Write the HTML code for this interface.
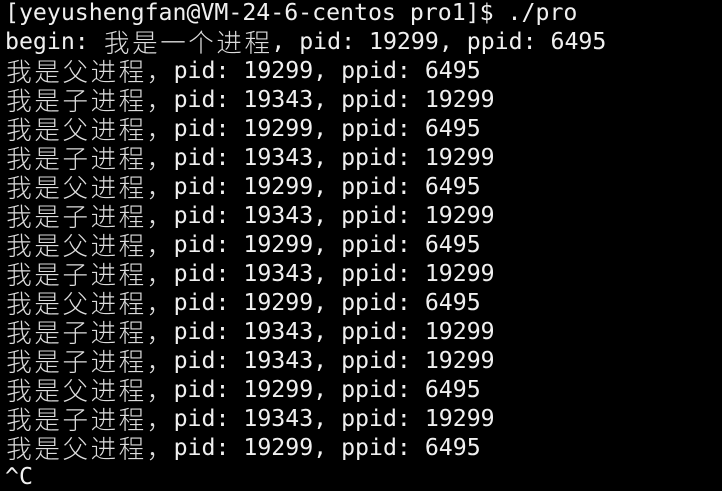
<!DOCTYPE html>
<html><head><meta charset="utf-8"><style>
html,body{margin:0;padding:0;background:#000;width:722px;height:469px;overflow:hidden}
.t{position:absolute;left:5px;top:-2px;color:#f0f0f0;font-family:"DejaVu Sans Mono","Noto Sans CJK SC",monospace;font-size:23.2px}
.t div{height:29px;line-height:29px;white-space:pre;overflow:visible}
.c{display:inline-block;width:28.1px;height:29px;line-height:29px;vertical-align:top;font-family:"Noto Sans CJK SC",sans-serif;text-align:center;font-weight:300;color:#ddd;font-size:25.5px}
</style></head><body><div class="t">
<div>[yeyushengfan@VM-24-6-centos pro1]$ ./pro</div>
<div>begin: <span class="c">我</span><span class="c">是</span><span class="c">一</span><span class="c">个</span><span class="c">进</span><span class="c">程</span>, pid: 19299, ppid: 6495</div>
<div><span class="c">我</span><span class="c">是</span><span class="c">父</span><span class="c">进</span><span class="c">程</span><span class="c">，</span>pid: 19299, ppid: 6495</div>
<div><span class="c">我</span><span class="c">是</span><span class="c">子</span><span class="c">进</span><span class="c">程</span><span class="c">，</span>pid: 19343, ppid: 19299</div>
<div><span class="c">我</span><span class="c">是</span><span class="c">父</span><span class="c">进</span><span class="c">程</span><span class="c">，</span>pid: 19299, ppid: 6495</div>
<div><span class="c">我</span><span class="c">是</span><span class="c">子</span><span class="c">进</span><span class="c">程</span><span class="c">，</span>pid: 19343, ppid: 19299</div>
<div><span class="c">我</span><span class="c">是</span><span class="c">父</span><span class="c">进</span><span class="c">程</span><span class="c">，</span>pid: 19299, ppid: 6495</div>
<div><span class="c">我</span><span class="c">是</span><span class="c">子</span><span class="c">进</span><span class="c">程</span><span class="c">，</span>pid: 19343, ppid: 19299</div>
<div><span class="c">我</span><span class="c">是</span><span class="c">父</span><span class="c">进</span><span class="c">程</span><span class="c">，</span>pid: 19299, ppid: 6495</div>
<div><span class="c">我</span><span class="c">是</span><span class="c">子</span><span class="c">进</span><span class="c">程</span><span class="c">，</span>pid: 19343, ppid: 19299</div>
<div><span class="c">我</span><span class="c">是</span><span class="c">父</span><span class="c">进</span><span class="c">程</span><span class="c">，</span>pid: 19299, ppid: 6495</div>
<div><span class="c">我</span><span class="c">是</span><span class="c">子</span><span class="c">进</span><span class="c">程</span><span class="c">，</span>pid: 19343, ppid: 19299</div>
<div><span class="c">我</span><span class="c">是</span><span class="c">子</span><span class="c">进</span><span class="c">程</span><span class="c">，</span>pid: 19343, ppid: 19299</div>
<div><span class="c">我</span><span class="c">是</span><span class="c">父</span><span class="c">进</span><span class="c">程</span><span class="c">，</span>pid: 19299, ppid: 6495</div>
<div><span class="c">我</span><span class="c">是</span><span class="c">子</span><span class="c">进</span><span class="c">程</span><span class="c">，</span>pid: 19343, ppid: 19299</div>
<div><span class="c">我</span><span class="c">是</span><span class="c">父</span><span class="c">进</span><span class="c">程</span><span class="c">，</span>pid: 19299, ppid: 6495</div>
<div>^C</div>
</div></body></html>
